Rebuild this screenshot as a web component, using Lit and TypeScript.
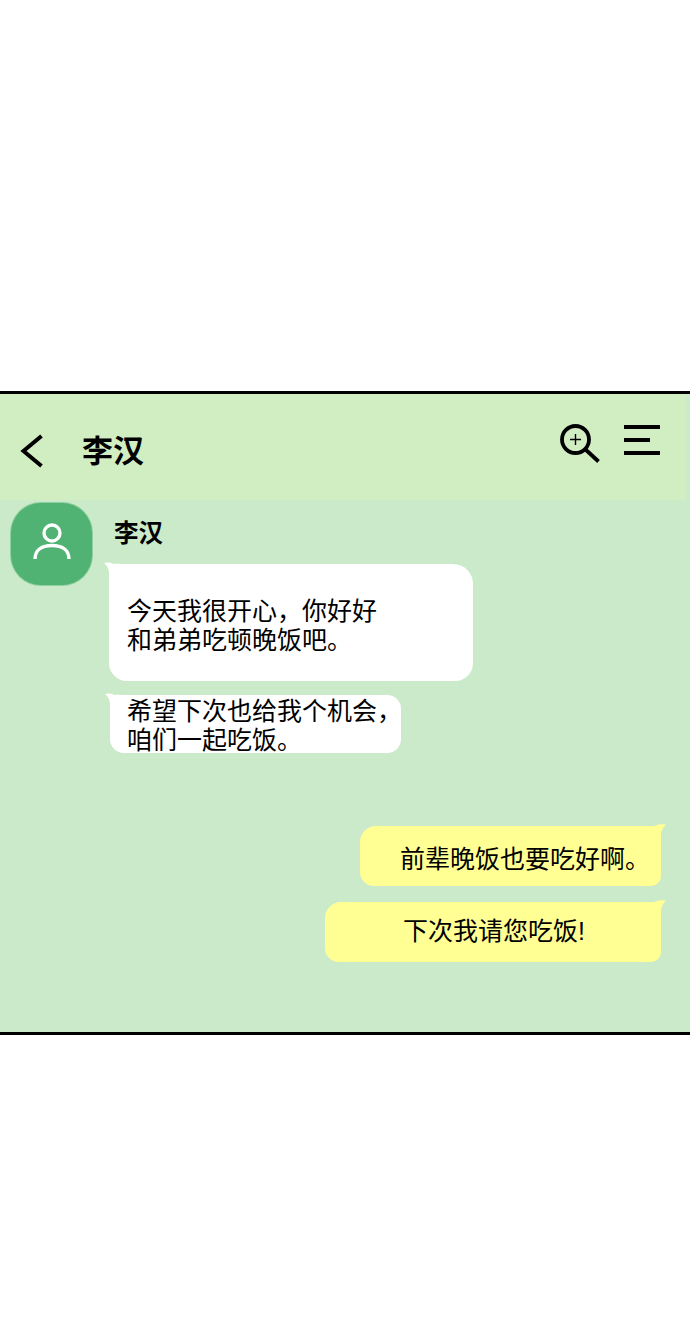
import { LitElement, html, css, svg } from "lit";
import { customElement } from "lit/decorators.js";

const leftTail = svg`<svg class="tail tail-left" width="18" height="16" viewBox="0 0 18 16"><path d="M0 1C3 0 7 0.500 10 2C12 1.500 15 2 18 2V16H5.500C5.500 9 4 4 0 1Z" fill="#fff"/></svg>`;
const rightTail = svg`<svg class="tail tail-right" width="22" height="16" viewBox="0 0 22 16"><path d="M22 0.800C18 -0.200 14 0.600 10 2H0V16H16.500C16.500 9 18 4 22 0.800Z" fill="#ffff94"/></svg>`;

@customElement("app-root")
export class AppRoot extends LitElement {
  static styles = css`
    :host {
      display: block;
      height: 1319px;
      background: #fff;
      font-family: "Noto Sans CJK SC", "Noto Sans", sans-serif;
      color: #000;
      padding-top: 391px;
      box-sizing: border-box;
    }

    .panel {
      height: 644px;
      box-sizing: border-box;
      border-top: 3px solid #000;
      border-bottom: 3px solid #000;
      background: #cbeac9;
    }

    .header {
      height: 106px;
      margin-right: 4px;
      background: #d1edc2;
      display: flex;
      align-items: flex-start;
    }

    .back {
      margin: 40px 0 0 20px;
      flex: none;
    }

    .title {
      margin: 33px 0 0 38px;
      font-size: 31px;
      line-height: 44px;
      font-weight: 700;
    }

    .actions {
      margin: 30px 26px 0 auto;
      display: flex;
      gap: 23px;
      align-items: flex-start;
    }

    .from {
      display: flex;
      padding: 3px 0 0 11px;
    }

    .avatar {
      width: 81px;
      height: 82px;
      flex: none;
      display: flex;
      align-items: center;
      justify-content: center;
      background: #50b273;
      border-radius: 30px;
      box-shadow: 0 0 0 1px #8fd09f;
    }

    .column {
      margin-left: 16px;
      display: flex;
      flex-direction: column;
      align-items: flex-start;
    }

    .name {
      margin: 11px 0 0 6px;
      font-size: 24.5px;
      line-height: 36px;
      font-weight: 700;
    }

    .bubble {
      position: relative;
      box-sizing: border-box;
      font-size: 25px;
      line-height: 29px;
      white-space: pre;
    }

    .tail {
      position: absolute;
      top: -2px;
      display: block;
    }

    .tail-left {
      left: -5px;
    }

    .tail-right {
      right: -5px;
    }

    .first {
      margin: 14px 0 0 0.500px;
      width: 364px;
      height: 117px;
      padding: 31px 0 0 18.500px;
      background: #fff;
      border-radius: 4px 20px 18px 18px;
    }

    .second {
      margin: 14px 0 0 2px;
      width: 291px;
      height: 58px;
      padding: 0 0 0 17px;
      background: #fff;
      border-radius: 4px 14px 14px 14px;
    }

    .mine {
      display: flex;
      flex-direction: column;
      align-items: flex-end;
      gap: 16px;
      margin-top: 73px;
      padding-right: 29px;
    }

    .yellow {
      background: #ffff94;
      border-radius: 16px 4px 10px 14px;
      height: 60px;
    }

    .third {
      width: 301px;
      padding: 17px 0 0 40px;
    }

    .fourth {
      width: 336px;
      padding: 13px 0 0 78px;
    }

    .fourth span {
      font-family: "Liberation Sans", sans-serif;
    }
  `;

  render() {
    return html`<div class="panel">
      <div class="header">
        <svg class="back" width="24" height="34" viewBox="0 0 24 34">
          <path d="M21.500 2L3.500 17L21.500 32" fill="none" stroke="#000" stroke-width="4" />
        </svg>
        <div class="title">李汉</div>
        <div class="actions">
          <svg width="42" height="40" viewBox="0 0 42 40">
            <circle cx="16.500" cy="15.500" r="13.500" fill="none" stroke="#000" stroke-width="3.800" />
            <path d="M26.500 25.500L39.500 37.500" stroke="#000" stroke-width="3.800" />
            <path d="M16.500 10V21M11 15.500H22" stroke="#000" stroke-width="1.400" />
          </svg>
          <svg width="36" height="34" viewBox="0 0 36 34">
            <path d="M0 3H36M0 16H26M0 29H36" stroke="#000" stroke-width="4" />
          </svg>
        </div>
      </div>

      <div class="from">
        <div class="avatar">
          <svg width="40" height="42" viewBox="0 0 40 42">
            <circle cx="20" cy="10" r="8" fill="none" stroke="#fff" stroke-width="3.400" />
            <path d="M3 36C3 27 10 22.500 20 22.500C30 22.500 37 27 37 36" fill="none" stroke="#fff" stroke-width="3.400" />
          </svg>
        </div>
        <div class="column">
          <div class="name">李汉</div>
          <div class="bubble first">${leftTail}今天我很开心，你好好
和弟弟吃顿晚饭吧。</div>
          <div class="bubble second">${leftTail}希望下次也给我个机会，
咱们一起吃饭。</div>
        </div>
      </div>

      <div class="mine">
        <div class="bubble yellow third">${rightTail}前辈晚饭也要吃好啊。</div>
        <div class="bubble yellow fourth">${rightTail}下次我请您吃饭<span>!</span></div>
      </div>
    </div>`;
  }
}
